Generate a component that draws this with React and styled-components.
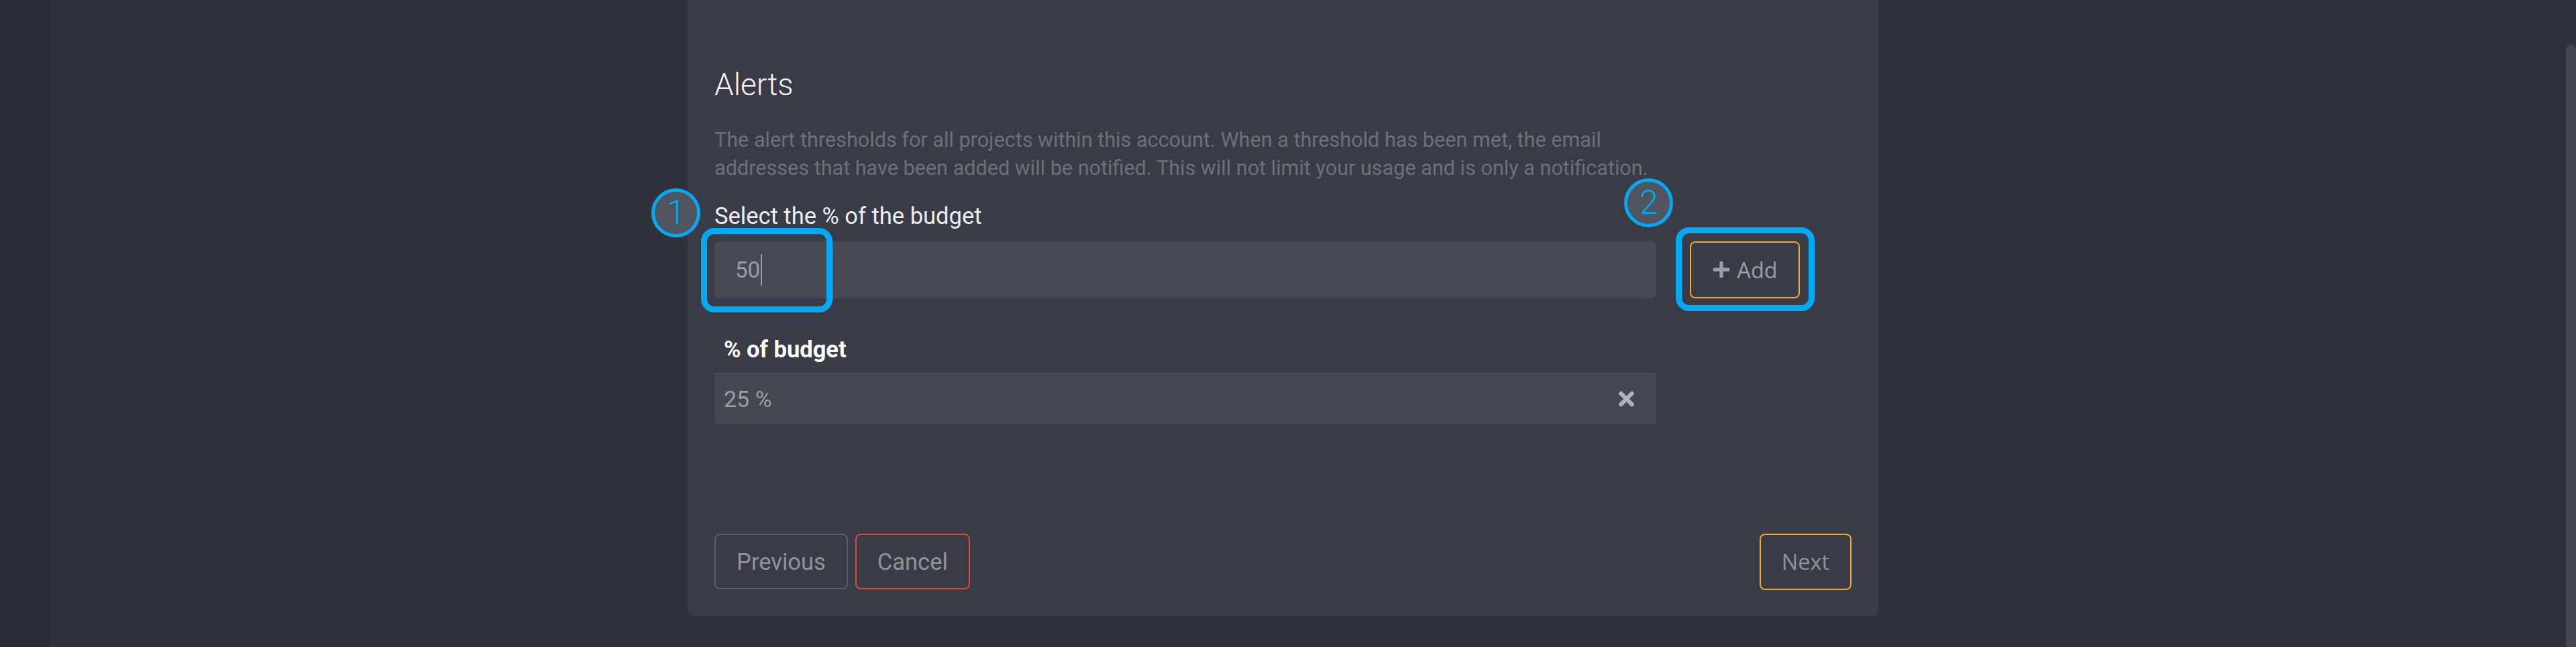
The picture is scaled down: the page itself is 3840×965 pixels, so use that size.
import React from 'react'
import styled, { createGlobalStyle } from 'styled-components'
import { FaPlus, FaTimes } from 'react-icons/fa'

const GlobalStyle = createGlobalStyle`
  html, body {
    margin: 0;
    height: 100%;
    overflow: hidden;
    background: #2f323b;
    font-family: Roboto, "Liberation Sans", sans-serif;
  }
  #root {
    height: 100%;
  }
  * {
    box-sizing: border-box;
  }
`

const colors = {
  blue: '#03a9f4',
  orange: '#f5a623',
  red: '#e0483c',
  muted: '#8f949c',
}

const Page = styled.div`
  display: flex;
  height: 100vh;
`

const Sidebar = styled.div`
  width: 75px;
  background: #292c34;
`

const Stage = styled.main`
  flex: 1;
  display: flex;
  justify-content: center;
  align-items: flex-start;
  padding-right: 75px;
`

const ScrollTrack = styled.div`
  width: 15px;
  display: flex;
  flex-direction: column;
`

const ScrollThumb = styled.div`
  flex: 1;
  margin-top: 67px;
  background: #434650;
  border-radius: 8px 8px 0 0;
`

const Panel = styled.section`
  width: 1775px;
  background: #393c46;
  border-radius: 0 0 8px 8px;
  padding: 98px 40px 39px;
`

const Heading = styled.h2`
  margin: 0;
  font-size: 46px;
  line-height: 56px;
  font-weight: 300;
  color: #f2f3f5;
`

const Description = styled.p`
  margin: 33.5px 0 0;
  max-width: 1404px;
  font-size: 30.6px;
  line-height: 42.5px;
  color: #6b707b;
`

const Label = styled.label`
  display: block;
  margin-top: 29px;
  font-size: 34.5px;
  line-height: 40px;
  color: #eceef0;
`

const FormRow = styled.div`
  margin-top: 18px;
  display: grid;
  grid-template-columns: 1404px 164px;
  column-gap: 50px;
`

const Anchor = styled.div`
  position: relative;
`

const Field = styled.div`
  height: 85px;
  border-radius: 8px;
  background: #474a54;
  display: flex;
  align-items: center;
  padding-left: 31px;
  font-size: 33px;
  color: #9a9ea6;
`

const Caret = styled.span`
  width: 2px;
  height: 47px;
  margin-left: 1px;
  background: #9a9ea6;
`

const Highlight = styled.div`
  position: absolute;
  left: ${(p) => p.left}px;
  top: ${(p) => p.top}px;
  width: ${(p) => p.w}px;
  height: ${(p) => p.h}px;
  border: 9px solid ${colors.blue};
  border-radius: 20px;
  pointer-events: none;
`

const StepBadge = styled.div`
  position: absolute;
  left: ${(p) => p.left}px;
  top: ${(p) => p.top}px;
  width: 73px;
  height: 73px;
  border-radius: 50%;
  border: 5px solid ${colors.blue};
  background: #4f545e;
  color: ${colors.blue};
  display: flex;
  align-items: center;
  justify-content: center;
  font-size: 50px;
  font-weight: 300;
  line-height: 1;
`

const Button = styled.button`
  height: ${(p) => p.h || 84}px;
  padding: 0 31px;
  background: transparent;
  border: 2px solid ${(p) => p.border};
  border-radius: 8px;
  color: ${colors.muted};
  font-family: ${(p) => (p.alt ? '"Open Sans", "Noto Sans", sans-serif' : 'Roboto, "Liberation Sans", sans-serif')};
  font-size: ${(p) => (p.alt ? '32.5px' : '34.5px')};
  display: inline-flex;
  align-items: center;
  justify-content: center;
  gap: 9px;
  cursor: pointer;
`

const AddButton = styled(Button)`
  width: 164px;
  padding: 0;
  color: #9a9ea6;

  svg {
    width: 28px;
    height: 28px;
  }
`

const TableHead = styled.div`
  margin-top: 54px;
  width: 1404px;
  padding-left: 14px;
  font-size: 34.5px;
  line-height: 44px;
  font-weight: 700;
  color: #ffffff;
`

const TableRow = styled.div`
  margin-top: 13px;
  width: 1404px;
  height: 76px;
  background: #44474f;
  border-top: 2px solid #4b4e5c;
  display: flex;
  align-items: center;
  justify-content: space-between;
  padding: 0 33px 0 14px;
  font-size: 34px;
  color: #9a9ea6;

  svg {
    width: 23px;
    height: 34px;
    color: #aeb1b8;
  }
`

const Footer = styled.div`
  margin-top: 164px;
  display: flex;
  align-items: center;
  gap: 11px;
`

const Spacer = styled.div`
  flex: 1;
`

const App = () => {
  return (
    <>
      <GlobalStyle />
      <Page>
        <Sidebar />
        <Stage>
          <Panel>
            <Heading>Alerts</Heading>
            <Description>
              The alert thresholds for all projects within this account. When a threshold has been met, the email
              addresses that have been added will be notified. This will not limit your usage and is only a notification.
            </Description>
            <Label>Select the % of the budget</Label>
            <FormRow>
              <Anchor>
                <Field>
                  50<Caret />
                </Field>
                <Highlight left={-20} top={-20} w={196} h={126} />
                <StepBadge left={-94} top={-79}>1</StepBadge>
              </Anchor>
              <Anchor>
                <AddButton h={85} border={colors.orange} alt>
                  <FaPlus />
                  Add
                </AddButton>
                <Highlight left={-21} top={-21} w={207} h={125} />
                <StepBadge left={-98} top={-94}>2</StepBadge>
              </Anchor>
            </FormRow>

            <TableHead>% of budget</TableHead>
            <TableRow>
              <span>25 %</span>
              <FaTimes />
            </TableRow>

            <Footer>
              <Button border="#5a5f70" h={83}>Previous</Button>
              <Button border={colors.red} h={83}>Cancel</Button>
              <Spacer />
              <Button border={colors.orange} alt>Next</Button>
            </Footer>
          </Panel>
        </Stage>
        <ScrollTrack>
          <ScrollThumb />
        </ScrollTrack>
      </Page>
    </>
  )
}

export default App
